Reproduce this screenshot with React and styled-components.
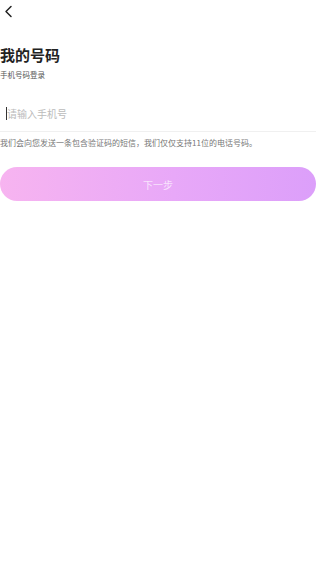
import React from "react";
import styled, { createGlobalStyle } from "styled-components";

const Global = createGlobalStyle`
  html, body { margin: 0; padding: 0; background: #fff; }
  body { font-family: "Noto Sans CJK SC", "Noto Sans", sans-serif; }
  * { box-sizing: border-box; }
`;

const Page = styled.div`
  width: 320px;
  min-height: 562px;
  display: flex;
  flex-direction: column;
  padding-right: 4px;
`;

const Header = styled.div`
  height: 22px;
  display: flex;
  align-items: center;
  padding-left: 2px;
`;

const BackButton = styled.button`
  border: 0;
  background: none;
  padding: 0;
  width: 12px;
  height: 14px;
  display: flex;
  align-items: center;
  justify-content: center;
  color: #222;
`;

const Title = styled.h1`
  margin: 23px 0 0;
  font-size: 15px;
  line-height: 20px;
  font-weight: 700;
  color: #222;
`;

const Subtitle = styled.p`
  margin: 5px 0 0;
  font-size: 7.5px;
  line-height: 10px;
  color: #555;
`;

const InputRow = styled.label`
  margin-top: 16px;
  height: 36px;
  display: flex;
  align-items: center;
  padding-left: 6px;
  border-bottom: 1px solid #f0f0f0;
`;

const Caret = styled.span`
  width: 1px;
  height: 13px;
  background: #333;
`;

const PhoneInput = styled.input`
  flex: 1;
  border: 0;
  outline: none;
  padding: 0;
  margin: 0;
  font-family: inherit;
  font-size: 10px;
  color: #333;
  background: transparent;
  &::placeholder { color: #bbbbbb; }
`;

const Hint = styled.p`
  margin: 5px 0 0;
  font-size: 8px;
  line-height: 12px;
  color: #777;
  white-space: nowrap;
`;

const NextButton = styled.button`
  margin-top: 18px;
  height: 34px;
  width: 100%;
  border: 0;
  border-radius: 17px;
  background: linear-gradient(90deg, #f7b4f0 0%, #e8a8f8 55%, #dc9ffa 100%);
  color: rgba(255, 255, 255, 0.7);
  font-family: inherit;
  font-size: 10px;
  padding: 0;
`;

export default function App() {
  return (
    <>
      <Global />
      <Page>
        <Header>
          <BackButton aria-label="back">
            <svg width="9" height="13" viewBox="0 0 9 13" fill="none">
              <path d="M7 1.5L2 6.5L7 11.5" stroke="#222" strokeWidth="1.5" strokeLinecap="round" strokeLinejoin="round" />
            </svg>
          </BackButton>
        </Header>
        <Title>我的号码</Title>
        <Subtitle>手机号码登录</Subtitle>
        <InputRow>
          <Caret />
          <PhoneInput placeholder="请输入手机号" />
        </InputRow>
        <Hint>我们会向您发送一条包含验证码的短信，我们仅仅支持11位的电话号码。</Hint>
        <NextButton>下一步</NextButton>
      </Page>
    </>
  );
}
